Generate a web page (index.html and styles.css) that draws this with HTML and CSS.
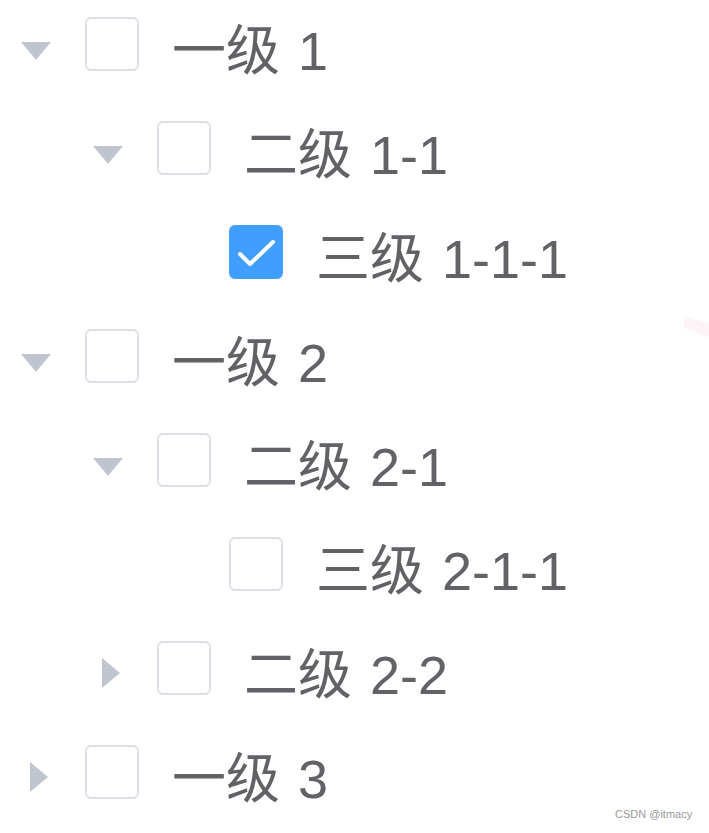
FILE: index.html
```html
<!DOCTYPE html>
<html lang="zh-CN">
<head>
    <meta charset="UTF-8">
    <title>树形控件</title>
    <link rel="stylesheet" href="styles.css">
</head>
<body>
    <div class="tree">
        <div class="node lv1">
            <span class="caret down"></span>
            <span class="checkbox"></span>
            <span class="label">一级 1</span>
        </div>
        <div class="node lv2">
            <span class="caret down"></span>
            <span class="checkbox"></span>
            <span class="label">二级 1-1</span>
        </div>
        <div class="node lv3">
            <span class="caret leaf"></span>
            <span class="checkbox checked">
                <svg viewBox="0 0 54 54" width="54" height="54"><path d="M11 29 L21 39 L44 17" fill="none" stroke="#fff" stroke-width="4" stroke-linecap="round" stroke-linejoin="round"/></svg>
            </span>
            <span class="label">三级 1-1-1</span>
        </div>
        <div class="node lv1">
            <span class="caret down"></span>
            <span class="checkbox"></span>
            <span class="label">一级 2</span>
        </div>
        <div class="node lv2">
            <span class="caret down"></span>
            <span class="checkbox"></span>
            <span class="label">二级 2-1</span>
        </div>
        <div class="node lv3">
            <span class="caret leaf"></span>
            <span class="checkbox"></span>
            <span class="label">三级 2-1-1</span>
        </div>
        <div class="node lv2">
            <span class="caret right"></span>
            <span class="checkbox"></span>
            <span class="label">二级 2-2</span>
        </div>
        <div class="node lv1">
            <span class="caret right"></span>
            <span class="checkbox"></span>
            <span class="label">一级 3</span>
        </div>
    </div>

    <svg class="stroke-mark" viewBox="0 0 30 30" width="30" height="30"><polygon points="2,0 30,8 30,22 2,12" fill="#fdf4f7"/></svg>
    <div class="watermark">CSDN @itmacy</div>
</body>
</html>
```

FILE: styles.css
```css
body {
    margin: 0;
    background: #fff;
    font-family: "Liberation Sans", "Noto Sans CJK SC", sans-serif;
    overflow: hidden;
}
.tree {
    margin-top: -8px;
}
.node {
    display: flex;
    align-items: center;
    height: 104px;
}
.lv2 {
    padding-left: 72px;
}
.lv3 {
    padding-left: 144px;
}
.caret {
    width: 72px;
    height: 30px;
    display: flex;
    align-items: center;
    justify-content: center;
    flex-shrink: 0;
}
.caret.down::before {
    content: "";
    margin-top: 14px;
    border-left: 15px solid transparent;
    border-right: 15px solid transparent;
    border-top: 18px solid #c0c4cc;
}
.caret.right::before {
    content: "";
    margin-left: 6px;
    margin-top: 9px;
    border-top: 15px solid transparent;
    border-bottom: 15px solid transparent;
    border-left: 18px solid #c0c4cc;
}
.checkbox {
    box-sizing: border-box;
    width: 54px;
    height: 54px;
    margin-left: 13px;
    margin-right: 33px;
    border: 2px solid #dcdfe6;
    border-radius: 6px;
    background: #fff;
    flex-shrink: 0;
    position: relative;
}
.checkbox.checked {
    background: #409eff;
    border-color: #409eff;
}
.checkbox svg {
    position: absolute;
    left: -2px;
    top: -2px;
}
.label {
    font-size: 54px;
    line-height: 56px;
    word-spacing: 3px;
    color: #606266;
    white-space: nowrap;
    position: relative;
    top: 7px;
}
.stroke-mark {
    position: absolute;
    left: 682px;
    top: 316px;
}
.watermark {
    position: absolute;
    left: 615px;
    top: 808px;
    font-size: 11px;
    color: #999;
}
```
